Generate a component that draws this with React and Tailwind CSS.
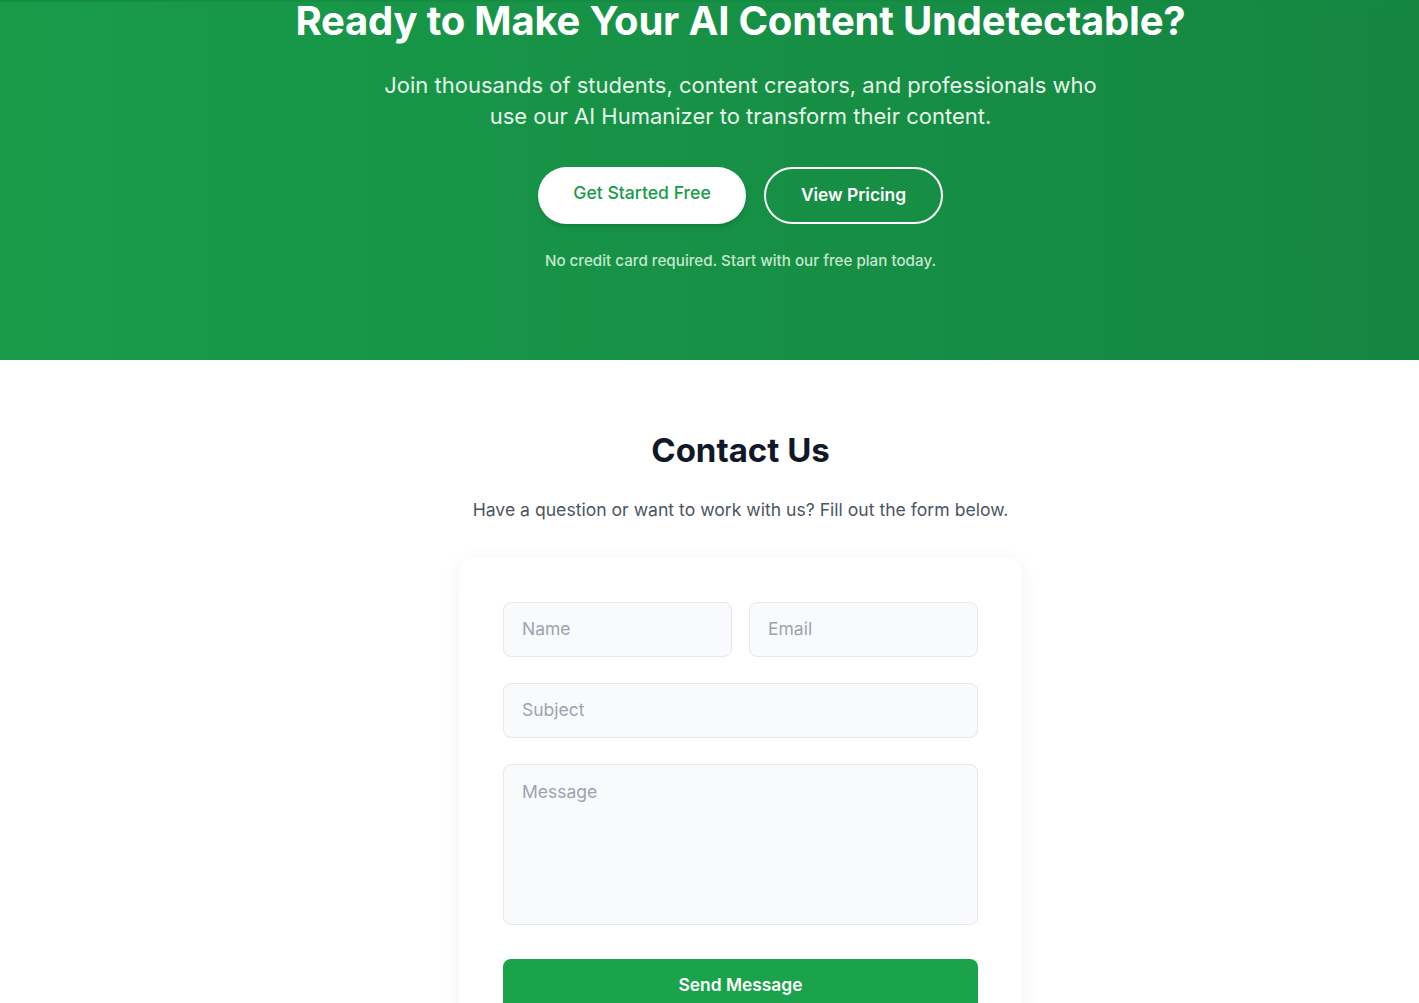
export default function App() {
  return (
    <div className="w-[1481px] min-h-screen bg-white" style={{ fontFamily: "Inter, 'Noto Sans', sans-serif" }}>
      <section className="h-[360px] bg-gradient-to-r from-[#189c4a] to-[#158541] relative overflow-hidden">
        <div className="absolute top-0 left-0 right-0 h-[3px] bg-gradient-to-b from-[#138a40] to-transparent" />
        <div className="flex flex-col items-center text-center mt-[-3px]">
          <h1 className="text-[40px] leading-[48px] font-bold text-white tracking-[-0.2px]">
            Ready to Make Your AI Content Undetectable?
          </h1>
          <p className="mt-[25px] text-[22px] leading-[31px] text-[#e6f5ea] max-w-[740px]">
            Join thousands of students, content creators, and professionals who use our AI Humanizer to transform their content.
          </p>
          <div className="mt-[35px] flex gap-[18px]">
            <button className="h-[57px] w-[208px] pb-[5px] rounded-full bg-white text-[#189c4a] text-[17.6px] font-medium shadow-md">
              Get Started Free
            </button>
            <button className="h-[57px] w-[179px] rounded-full border-2 border-white text-white text-[17.4px] font-semibold">
              View Pricing
            </button>
          </div>
          <p className="mt-[26px] text-[15.2px] font-medium text-[#c4e8cf]">
            No credit card required. Start with our free plan today.
          </p>
        </div>
      </section>
      <section className="flex flex-col items-center pt-[70px]">
        <h2 className="text-[33px] leading-[40px] font-bold text-[#111827]">Contact Us</h2>
        <p className="mt-[28px] text-[17.6px] leading-[24px] text-[#4b5563]">
          Have a question or want to work with us? Fill out the form below.
        </p>
        <div className="mt-[35px] w-[563px] rounded-2xl bg-white shadow-[0_4px_20px_rgba(0,0,0,0.06)] px-[44px] pt-[45px] pb-[40px]">
          <div className="grid grid-cols-2 gap-[17px]">
            <input placeholder="Name" className="h-[55px] rounded-lg border border-[#e5e7eb] bg-[#f9fafb] px-[18px] pb-[2px] text-[17.5px] placeholder:text-[#9ca3af] outline-none" />
            <input placeholder="Email" className="h-[55px] rounded-lg border border-[#e5e7eb] bg-[#f9fafb] px-[18px] pb-[2px] text-[17.5px] placeholder:text-[#9ca3af] outline-none" />
          </div>
          <input placeholder="Subject" className="mt-[26px] w-full h-[55px] rounded-lg border border-[#e5e7eb] bg-[#f9fafb] px-[18px] pb-[2px] text-[17.5px] placeholder:text-[#9ca3af] outline-none block" />
          <textarea placeholder="Message" className="mt-[26px] w-full h-[161px] rounded-lg border border-[#e5e7eb] bg-[#f9fafb] px-[18px] py-[14px] text-[17.5px] placeholder:text-[#9ca3af] outline-none block resize-none" />
          <button className="mt-[34px] w-full h-[52px] rounded-lg bg-[#1aa34a] text-white text-[17.4px] font-semibold">
            Send Message
          </button>
        </div>
      </section>
    </div>
  );
}
